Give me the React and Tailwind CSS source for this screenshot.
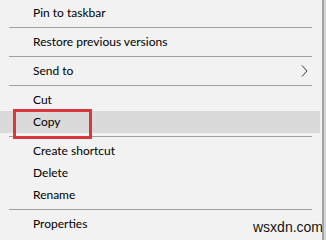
const font = { fontFamily: 'Lato, "Noto Sans", sans-serif' }

function Item({ label, active, sub }) {
    return (
        <div className={`h-[22px] flex items-center pl-[33px] pr-[11px] text-[12px] text-[#000] ${active ? 'bg-[#dadada]' : ''}`}>
            <span className="flex-1">{label}</span>
            {sub && (
                <svg width="7" height="12" viewBox="0 0 7 12" className="mr-[1px]">
                    <polyline points="1,0.5 6,6 1,11.5" fill="none" stroke="#3a3a3a" strokeWidth="1" />
                </svg>
            )}
        </div>
    )
}

function Sep() {
    return (
        <div className="h-[7px] flex items-center">
            <div className="ml-[9px] w-[303px] h-[1px] bg-[#a0a0a0]" />
        </div>
    )
}

export default function App() {
    return (
        <div className="relative w-[326px] h-[240px] overflow-hidden bg-[#f2f2f2] flex" style={font}>
            <div className="w-[322px] pr-[2px] pt-[2px] flex flex-col">
                <Item label="Pin to taskbar" />
                <Sep />
                <Item label="Restore previous versions" />
                <Sep />
                <Item label="Send to" sub />
                <Sep />
                <Item label="Cut" />
                <Item label="Copy" active />
                <Sep />
                <Item label="Create shortcut" />
                <Item label="Delete" />
                <Item label="Rename" />
                <Sep />
                <Item label="Properties" />
            </div>
            <div className="w-[2px] bg-[#a3a3a3]" />
            <div className="w-[2px] bg-[#d6d6d6]" />

            {/* annotation box */}
            <div className="absolute left-[13px] top-[109px] w-[79px] h-[30px] border-[3px] border-[#d8373e]" />

            {/* watermark */}
            <div
                className="absolute left-[253px] top-[220px] text-[14px] text-[#111] leading-none"
                style={{ fontFamily: '"Liberation Sans", Arial, sans-serif', textShadow: '0 0 2px #fff' }}
            >
                wsxdn.com
            </div>
        </div>
    )
}
